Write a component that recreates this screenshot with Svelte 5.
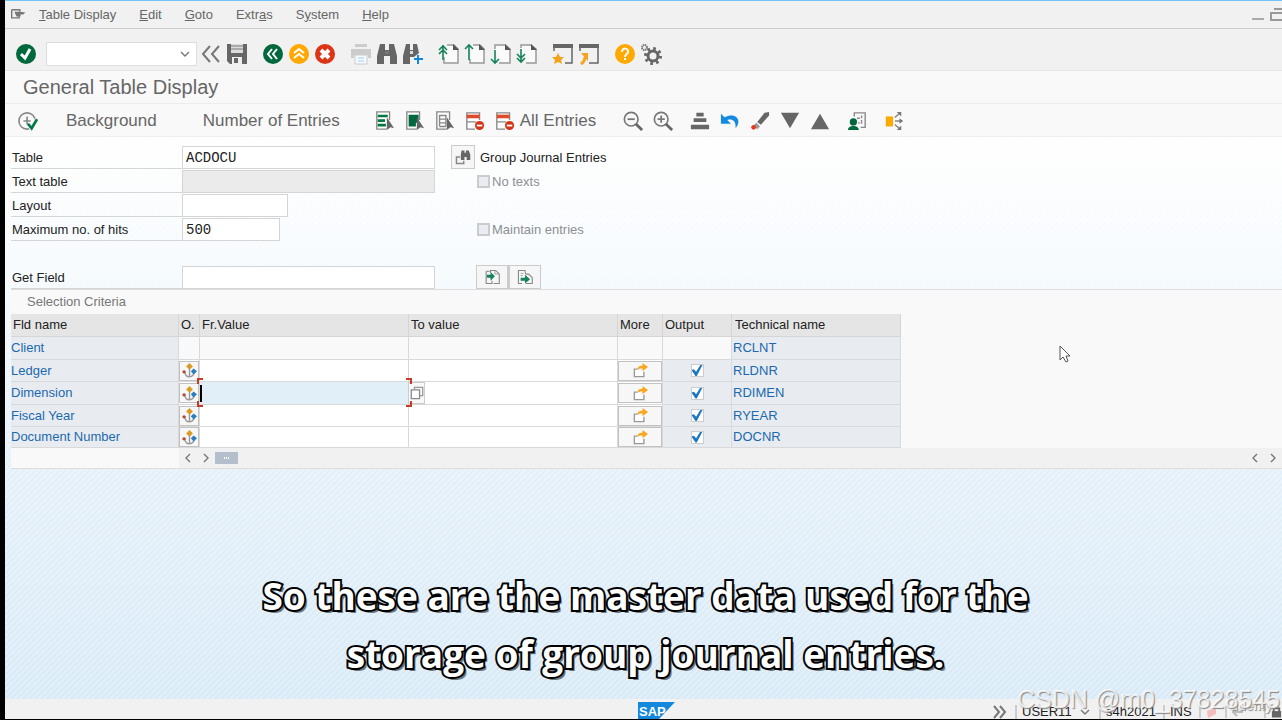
<script>
	const icons = {
		menu: '<path d="M1 4h12v3M1 4v12h11v-3" fill="none" stroke="#777" stroke-width="2"/><path d="M5 7h9l7 1-3 3h-4v3H8z" fill="#777"/>',
		ok: '<circle cx="11" cy="11" r="10" fill="#00683c"/><path d="M6 11l4 4 5-9" fill="none" stroke="#fff" stroke-width="3"/>',
		collapse: '<path d="M10 3l-7 8 7 8M19 3l-7 8 7 8" fill="none" stroke="#777" stroke-width="2"/>',
		save: '<path d="M1 1h20v20H4l-3-3z" fill="#666"/><path d="M5 1h12v9H5z" fill="#ddd"/><path d="M5 3h12M5 6h12" stroke="#777"/><path d="M6 14h10v7H6z" fill="#eee"/><path d="M8 15h4v5H8z" fill="#666"/>',
		back: '<circle cx="11" cy="11" r="10" fill="#00683c"/><path d="M10 6l-4 5 4 5M15 6l-4 5 4 5" fill="none" stroke="#fff" stroke-width="2"/>',
		exit: '<circle cx="11" cy="11" r="10" fill="#ffa800"/><path d="M6 10l5-4 5 4M6 15l5-4 5 4" fill="none" stroke="#fff" stroke-width="2"/>',
		cancel: '<circle cx="11" cy="11" r="10" fill="#dc3415"/><path d="M7 7l8 8M15 7l-8 8" stroke="#fff" stroke-width="4"/>',
		print: '<path d="M5 1h12v3H5z" fill="#ccc"/><path d="M1 6h20v9h-3v-3H4v3H1z" fill="#ccc"/><path d="M5 12h12v9H5z" fill="#f7fafc" stroke="#ccc"/><path d="M8 15h6M8 18h6" stroke="#9bd0f5"/>',
		find: '<path d="M4 1h5v6h4V1h5l3 12v8h-7v-8H8v8H1v-8z" fill="#666"/><path d="M9 8h4v3H9z" fill="#777"/>',
		findNext: '<path d="M4 1h4v6h3V1h4l2 9-5 4H8v7H1v-8z" fill="#666"/><path d="M8 8h3v3H8z" fill="#ddd"/><path d="M16 12v9M12 16h9" stroke="#1087dd" stroke-width="2"/>',
		first: '<path d="M9 2h7l4 4v14H6v-6" fill="#fafafa" stroke="#999" stroke-width="1.5"/><path d="M15 1v6h6z" fill="#555"/><path d="M5 17V2M1 7l4-4 4 4M1 11l4-4 4 4" fill="none" stroke="#16845a" stroke-width="1.6"/>',
		prev: '<path d="M9 2h7l4 4v14H6v-4" fill="#fafafa" stroke="#999" stroke-width="1.5"/><path d="M15 1v6h6z" fill="#555"/><path d="M5 17V2M1 6l4-4 4 4" fill="none" stroke="#16845a" stroke-width="1.6"/>',
		next: '<path d="M5 6V2h10l5 4v14H9" fill="#fafafa" stroke="#999" stroke-width="1.5"/><path d="M15 1v6h6z" fill="#555"/><path d="M5 7v13M1 16l4 4 4-4" fill="none" stroke="#16845a" stroke-width="1.6"/>',
		last: '<path d="M5 5V2h10l5 4v14H10" fill="#fafafa" stroke="#999" stroke-width="1.5"/><path d="M15 1v6h6z" fill="#555"/><path d="M5 6v13M1 11l4 4 4-4M1 15l4 4 4-4" fill="none" stroke="#16845a" stroke-width="1.6"/>',
		session: '<path d="M2 8V3h18v17h-7" fill="none" stroke="#666" stroke-width="1.5"/><path d="M1 1h20v4H1z" fill="#666"/><path d="M6 10l2 4h4l-3 3 1 4-4-2-4 2 1-4-3-3h4z" fill="#f5a21c"/>',
		shortcut: '<path d="M2 8V3h18v17h-9" fill="none" stroke="#666" stroke-width="1.5"/><path d="M1 1h20v4H1z" fill="#666"/><path d="M3 21c3-2 4-4 4-7" fill="none" stroke="#f5a21c" stroke-width="3"/><path d="M3 10h7v8z" fill="#f5a21c"/>',
		help: '<circle cx="11" cy="11" r="10" fill="#ffa800"/><path d="M8 9c0-5 7-4 6 0 0 2-3 2-3 5" fill="none" stroke="#fff" stroke-width="2"/><path d="M10 15h2v2h-2z" fill="#fff"/>',
		settings: '<circle cx="13" cy="13" r="5" fill="none" stroke="#666" stroke-width="3"/><circle cx="13" cy="13" r="7.5" fill="none" stroke="#666" stroke-width="3" stroke-dasharray="2.6 3.29"/><circle cx="4.5" cy="4.5" r="2.5" fill="none" stroke="#777" stroke-width="2" stroke-dasharray="1.4 .56"/>',
		execute: '<circle cx="10" cy="11" r="9" fill="none" stroke="#888" stroke-width="1.8"/><path d="M10 6v9M6 11h8" fill="none" stroke="#888" stroke-width="1.8"/><path d="M11 14l4 5 6-10" fill="none" stroke="#f9f9f9" stroke-width="5"/><path d="M11 14l4 5 6-10" fill="none" stroke="#00784a" stroke-width="3"/>',
		selectAll: '<path d="M13 20H2V1h14v9" fill="#fff" stroke="#888" stroke-width="1.5"/><path d="M3 4h11v3H3zM3 9h8v3H3zM3 14h9v3H3z" fill="#00783f"/><path d="M13 7l8 12-4-1-4 3z" fill="#666"/>',
		selectBlock: '<path d="M13 20H2V1h14v9" fill="#fff" stroke="#888" stroke-width="1.5"/><path d="M4 4h11v9h-3v4H4z" fill="#00683c"/><path d="M13 7l8 12-4-1-4 3z" fill="#666"/>',
		deselect: '<path d="M13 20H2V1h14v9" fill="#fff" stroke="#888" stroke-width="1.5"/><path d="M5 5h8M5 9h7M5 13h7M5 17h7M5 4v13M12 4v13" stroke="#888" stroke-width="1.5"/><path d="M13 7l8 12-4-1-4 3z" fill="#666"/>',
		deleteRow: '<path d="M11 20H2V2h14v8M2 12h10" fill="#fff" stroke="#888" stroke-width="1.5"/><path d="M2 4h14v4H2z" fill="#e04a2b"/><circle cx="16" cy="16" r="5" fill="#d33417"/><path d="M13 16h6" stroke="#fff" stroke-width="2"/>',
		zoomOut: '<circle cx="9" cy="9" r="7.5" fill="none" stroke="#777" stroke-width="1.8"/><path d="M5 9h8" stroke="#777" stroke-width="2"/><path d="M14 14l7 7" stroke="#666" stroke-width="3"/>',
		zoomIn: '<circle cx="9" cy="9" r="7.5" fill="none" stroke="#777" stroke-width="1.8"/><path d="M5 9h8M9 5v8" stroke="#777" stroke-width="2"/><path d="M14 14l7 7" stroke="#666" stroke-width="3"/>',
		sort: '<path d="M7 2h8v4H7zM4 8h14v4H4zM1 15h20v5H1z" fill="#666"/>',
		undo: '<path d="M1 3v11h11L8 10c6-2 10 2 9 9 8-9 0-18-12-12z" fill="#148ae0"/>',
		edit: '<path d="M16 2l5-1v4l-9 10-4-3z" fill="#666"/><path d="M7 13l4 4-3 3-4-4z" fill="#999"/><circle cx="4" cy="18" r="2.6" fill="#e23a1c"/>',
		down: '<path d="M1 2h20L11 19z" fill="#666"/>',
		up: '<path d="M1 20h20L11 3z" fill="#666"/>',
		user: '<path d="M8 6V2h12v16h-5" fill="none" stroke="#888" stroke-width="1.5"/><path d="M11 8h3M16 5v3M16 10v4M12 13h2" stroke="#888" stroke-width="1.5"/><circle cx="7" cy="12" r="4" fill="#00683c"/><path d="M1 21c0-6 12-6 12 0z" fill="#00683c"/>',
		split: '<path d="M2 6h8v11H2z" fill="#ffa800"/><path d="M12 7l6-5M12 11h8M12 15l6 5" stroke="#888" stroke-width="1.5"/><path d="M14 1h5v5zM17 8l4 3-4 3zM14 21h5v-5z" fill="#777"/>',
		lookup: '<path d="M7 11H2v9h10v-4" fill="none" stroke="#888" stroke-width="2"/><path d="M9 2h4v3h2V2h4l2 6v7h-5v-4h-3v4H8V8z" fill="#666"/>',
		getIn: '<path d="M9 5V2h7l5 5v13h-8M3 3h5M3 3v17h8v-4" fill="none" stroke="#888" stroke-width="1.5"/><path d="M15 2v5h5" fill="none" stroke="#888"/><path d="M4 8h5V4l6 6-6 6v-4H4z" fill="#16845a"/>',
		getOut: '<path d="M7 20H2V2h9l1 5M12 7h4l5 5v8h-9" fill="none" stroke="#888" stroke-width="1.5"/><path d="M5 6h4M5 9h3" stroke="#888"/><path d="M5 12h6V8l7 6-7 6v-4H5z" fill="#16845a"/>',
		option: '<path d="M4 13c1 10 13 9 14 0M11 8v12" fill="none" stroke="#999" stroke-width="2"/><path d="M11 0l5 5-5 5-5-5z" fill="#d99b27"/><path d="M13 12l4-4 5 4-5 5z" fill="#2b7cc0"/><circle cx="3" cy="13" r="2.5" fill="#b54a32"/>',
		more: '<path d="M7 9H2v11h14v-7" fill="#fff" stroke="#999" stroke-width="2"/><path d="M7 10c0-5 2-6 7-6V0l8 6-8 6V8c-4 0-5 0-7 2z" fill="#f8a71f"/>',
		copies: '<path d="M7 5V2h13v13h-4" fill="none" stroke="#999" stroke-width="2"/><path d="M2 6h13v14H2z" fill="#fff" stroke="#888" stroke-width="2"/>'
	};

	const menus = [
		['', 'T', 'able Display'],
		['', 'E', 'dit'],
		['', 'G', 'oto'],
		['Extr', 'a', 's'],
		['S', 'y', 'stem'],
		['', 'H', 'elp']
	];

	const systemGroups = [
		['collapse', 'save'],
		['back', 'exit', 'cancel'],
		['print', 'find', 'findNext'],
		['first', 'prev', 'next', 'last'],
		['session', 'shortcut'],
		['help', 'settings']
	];

	const listGroups = [
		['zoomOut', 'zoomIn'],
		['sort', 'undo', 'edit', 'down', 'up'],
		['user'],
		['split']
	];

	let rows = $state([
		{ name: 'Client', tech: 'RCLNT', locked: true },
		{ name: 'Ledger', tech: 'RLDNR', from: '', to: '', output: true },
		{ name: 'Dimension', tech: 'RDIMEN', from: '', to: '', output: true, active: true },
		{ name: 'Fiscal Year', tech: 'RYEAR', from: '', to: '', output: true },
		{ name: 'Document Number', tech: 'DOCNR', from: '', to: '', output: true }
	]);

	let command = $state('');
	let table = $state('ACDOCU');
	let layout = $state('');
	let maxHits = $state('500');
	let getField = $state('');
</script>

{#snippet icon(name)}
	<svg class="icon" viewBox="0 0 22 22" aria-hidden="true">{@html icons[name]}</svg>
{/snippet}

{#snippet iconButton(name)}
	<button class="icon-btn" aria-label={name}>{@render icon(name)}</button>
{/snippet}

{#snippet chevron(d)}
	<svg class="chevron" viewBox="0 0 10 10" aria-hidden="true"><path {d} /></svg>
{/snippet}

<div class="window">
	<nav class="menubar">
		<button class="menu-icon" aria-label="Menu">{@render icon('menu')}</button>
		{#each menus as [before, key, after]}
			<button class="menu">{before}<u>{key}</u>{after}</button>
		{/each}
		<div class="window-controls">
			<svg viewBox="0 0 30 16" aria-hidden="true">
				<path d="M0 12h12" stroke="#aaa" stroke-width="2" />
				<path d="M19 6h14v7H19zM22 2h10" fill="none" stroke="#999" stroke-width="2" />
			</svg>
		</div>
	</nav>

	<div class="toolbar system">
		{@render iconButton('ok')}
		<div class="command">
			<input aria-label="Command" bind:value={command} />
			{@render chevron('M1 3l4 4 4-4')}
		</div>
		{#each systemGroups as group}
			<div class="group">
				{#each group as name}{@render iconButton(name)}{/each}
			</div>
		{/each}
	</div>

	<h1>General Table Display</h1>

	<div class="toolbar list">
		{@render iconButton('execute')}
		<button class="text-btn">Background</button>
		<button class="text-btn">Number of Entries</button>
		<div class="group">
			{#each ['selectAll', 'selectBlock', 'deselect', 'deleteRow'] as name}
				{@render iconButton(name)}
			{/each}
			<button class="all-entries">{@render icon('deleteRow')}All Entries</button>
		</div>
		{#each listGroups as group}
			<div class="group">
				{#each group as name}{@render iconButton(name)}{/each}
			</div>
		{/each}
	</div>

	<main>
		<form>
			<div class="row">
				<label for="table">Table</label>
				<input id="table" bind:value={table} />
				<button type="button" class="lookup" aria-label="Lookup">{@render icon('lookup')}</button>
				<span class="description">Group Journal Entries</span>
			</div>
			<div class="row">
				<label for="text-table">Text table</label>
				<input id="text-table" disabled />
				<label class="check"><input type="checkbox" disabled />No texts</label>
			</div>
			<div class="row">
				<label for="layout">Layout</label>
				<div class="slot"><input id="layout" class="medium" bind:value={layout} /></div>
			</div>
			<div class="row">
				<label for="max-hits">Maximum no. of hits</label>
				<div class="slot"><input id="max-hits" class="short" bind:value={maxHits} /></div>
				<label class="check"><input type="checkbox" disabled />Maintain entries</label>
			</div>
			<div class="row spaced">
				<label for="get-field">Get Field</label>
				<input id="get-field" bind:value={getField} />
				<div class="pair">
					<button type="button" aria-label="Get field">{@render icon('getIn')}</button>
					<button type="button" aria-label="Next field">{@render icon('getOut')}</button>
				</div>
			</div>
		</form>

		<section class="criteria">
			<h2>Selection Criteria</h2>
			<table>
				<colgroup>
					<col class="c-name" /><col class="c-option" /><col class="c-from" /><col class="c-to" />
					<col class="c-more" /><col class="c-output" /><col class="c-tech" />
				</colgroup>
				<thead>
					<tr>
						<th>Fld name</th>
						<th>O.</th>
						<th>Fr.Value</th>
						<th>To value</th>
						<th>More</th>
						<th>Output</th>
						<th>Technical name</th>
					</tr>
				</thead>
				<tbody>
					{#each rows as row}
						<tr class:locked={row.locked}>
							<td class="key">{row.name}</td>
							{#if row.locked}
								<td></td><td></td><td></td><td></td><td></td>
							{:else}
								<td><button class="cell-btn" aria-label="Option">{@render icon('option')}</button></td>
								<td class:active={row.active}>
									<input aria-label="{row.name} from" bind:value={row.from} />
									{#if row.active}
										<span class="caret"></span>
										<button class="value-help" aria-label="Value help">{@render icon('copies')}</button>
										<i class="corner top left"></i>
										<i class="corner top right"></i>
										<i class="corner bottom left"></i>
										<i class="corner bottom right"></i>
									{/if}
								</td>
								<td><input aria-label="{row.name} to" bind:value={row.to} /></td>
								<td><button class="cell-btn" aria-label="More">{@render icon('more')}</button></td>
								<td class="output">
									<input type="checkbox" aria-label="{row.name} output" bind:checked={row.output} />
								</td>
							{/if}
							<td class="key">{row.tech}</td>
						</tr>
					{/each}
				</tbody>
			</table>
			<div class="scrollbar">
				<button aria-label="Left">{@render chevron('M7 1L3 5l4 4')}</button>
				<button aria-label="Right">{@render chevron('M3 1l4 4-4 4')}</button>
				<span class="thumb"><b></b><b></b><b></b></span>
				<button class="push" aria-label="Page left">{@render chevron('M7 1L3 5l4 4')}</button>
				<button aria-label="Page right">{@render chevron('M3 1l4 4-4 4')}</button>
			</div>
		</section>
	</main>

	<footer>
		<svg class="logo" viewBox="0 0 37 17" role="img" aria-label="SAP">
			<path d="M0 0h37L21 17H0z" fill="#1488dc" />
			<text x="1" y="14">SAP</text>
		</svg>
		<div class="status">
			<svg class="expand" viewBox="0 0 14 14" aria-hidden="true"><path d="M1 1l5 6-5 6M7 1l5 6-5 6" /></svg>
			<span class="user">USER11 {@render chevron('M1 3l4 4 4-4')}</span>
			<span class="host">s4h2021</span>
			<span class="mode">INS</span>
			<span class="signal"><svg viewBox="0 0 12 12" aria-hidden="true"><path d="M1 5l9-4v7l-8 4z" fill="#f3bcbc" /></svg></span>
			<span class="transfer"><svg viewBox="0 0 12 12" aria-hidden="true"><path d="M11 6H2M5 2L1 6l4 4" fill="none" stroke="#bbb" stroke-width="2" /></svg></span>
			<span class="lock"><svg viewBox="0 0 12 12" aria-hidden="true"><path d="M3 6V2h6v4" fill="none" stroke="#666" stroke-width="2" /><path d="M1 5h10v7H1z" fill="#666" /></svg></span>
		</div>
	</footer>

	<svg class="pointer" viewBox="0 0 12 18" aria-hidden="true">
		<path d="M1 1v14l3-3 3 5 2-1-2-5h4z" fill="#fff" stroke="#555" />
	</svg>
	<p class="caption">So these are the master data used for the<br />storage of group journal entries.</p>
	<span class="brand">ûdemy</span>
	<span class="watermark">CSDN @m0_37828545</span>
</div>

<style>
	:global(body) {
		background: #000;
	}

	* {
		box-sizing: border-box;
	}

	.window {
		position: relative;
		display: flex;
		flex-direction: column;
		height: 100vh;
		overflow: hidden;
		border-left: 5px solid #000;
		border-bottom: 1px solid #000;
		background: #f9f9f9;
		color: #222;
		font: 13px/16px "Liberation Sans", Arial, sans-serif;
	}

	button,
	input {
		margin: 0;
		padding: 0;
		border: none;
		border-radius: 0;
		outline: none;
		background: none;
		color: inherit;
		font: inherit;
	}

	.icon {
		display: block;
		width: 22px;
		height: 22px;
	}

	.chevron {
		width: 10px;
		height: 10px;
		fill: none;
		stroke: #777;
		stroke-width: 1.4;
	}

	/* Menu and toolbars */
	.menubar {
		display: flex;
		flex: none;
		align-items: center;
		gap: 23px;
		height: 29px;
		padding-left: 6px;
		border-top: 1px solid #6fc5fb;
		border-bottom: 1px solid #ccc;
		background: #f1f1f1;
		color: #666;
	}

	.menu-icon {
		margin-right: -10px;
	}

		.menu-icon .icon {
			width: 15px;
			height: 15px;
		}

	.window-controls {
		margin-left: auto;
	}

		.window-controls svg {
			display: block;
			width: 30px;
			height: 16px;
		}

	.toolbar {
		display: flex;
		flex: none;
		align-items: center;
		padding-left: 10px;
	}

	.system {
		gap: 14px;
		height: 42px;
		padding-top: 8px;
		border-bottom: 1px solid #e6e6e6;
		background: #f1f1f1;
	}

	.command {
		display: flex;
		align-items: center;
		width: 151px;
		height: 24px;
		margin: 0 -11px 0 -5px;
		padding-right: 6px;
		border: 1px solid #ddd;
		background: #fff;
	}

		.command input {
			flex: 1;
			min-width: 0;
		}

	.group {
		display: flex;
		gap: 4px;
	}

	h1 {
		flex: none;
		height: 33px;
		margin: 0;
		padding-left: 18px;
		border-bottom: 1px solid #ececec;
		color: #666;
		font-size: 20px;
		font-weight: normal;
		line-height: 32px;
	}

	.list {
		gap: 17px;
		height: 33px;
		padding-top: 1px;
		padding-left: 13px;
		border-bottom: 1px solid #eee;
		color: #666;
		font-size: 17px;
	}

		.list .icon {
			width: 20px;
			height: 20px;
		}

		.list .group {
			gap: 10px;
		}

	.text-btn {
		padding: 0 18px 0 11px;
	}

	.all-entries {
		display: flex;
		align-items: center;
		gap: 5px;
		padding-right: 10px;
	}

	/* Selection form */
	main {
		flex: 1;
		min-height: 0;
		padding-top: 8px;
		background:
			linear-gradient(135deg, rgba(255, 255, 255, 0.25) 25%, transparent 25% 50%, rgba(255, 255, 255, 0.25) 50% 75%, transparent 75%) 0 0 / 6px 6px,
			linear-gradient(#fefefe, #f5fafd 25%, #e4f0f9 60%, #d8eaf7);
	}

	form {
		padding-left: 6px;
	}

	.row {
		display: flex;
		align-items: flex-end;
		height: 24px;
	}

	.spaced {
		margin-top: 24px;
	}

	.row > label:first-child {
		width: 171px;
		height: 23px;
		padding-left: 1px;
		border-bottom: 1px solid #d5d5d5;
		line-height: 23px;
	}

	.row > input,
	.slot {
		width: 253px;
	}

	.row > input,
	.slot input {
		height: 23px;
		padding: 0 3px;
		border: 1px solid #d5d5d5;
		background: #fff;
		font: 14px "Liberation Mono", monospace;
	}

		.row > input:disabled {
			background: #ebebeb;
		}

	.slot {
		display: flex;
	}

		.slot .medium {
			width: 106px;
		}

		.slot .short {
			width: 98px;
		}

	.lookup,
	.pair button {
		display: flex;
		align-items: center;
		justify-content: center;
		height: 24px;
		border: 1px solid #ccc;
		background: #f6f6f6;
	}

	.lookup {
		width: 24px;
		margin-left: 16px;
	}

		.lookup .icon,
		.pair .icon {
			width: 16px;
			height: 16px;
		}

	.description {
		margin-left: 5px;
		line-height: 23px;
	}

	.check {
		display: flex;
		align-items: center;
		gap: 2px;
		height: 23px;
		margin-left: 42px;
		color: #8c8f95;
	}

	input[type="checkbox"] {
		appearance: none;
		width: 13px;
		height: 13px;
		border: 2px solid #ccc;
		background: #e9ecf1;
	}

	.pair {
		display: flex;
		margin-left: 41px;
	}

		.pair button {
			width: 32px;
		}

			.pair button + button {
				border-left-width: 2px;
				width: 33px;
			}

	/* Criteria table */
	.criteria {
		margin-left: 6px;
		border-top: 1px solid #ddd;
		border-bottom: 1px solid #ddd;
		background: #f9f9f9;
	}

	h2 {
		height: 24px;
		margin: 0;
		padding-left: 16px;
		color: #777;
		font-size: 13px;
		font-weight: normal;
		line-height: 23px;
	}

	table {
		width: 890px;
		border-spacing: 0;
		table-layout: fixed;
	}

	.c-name { width: 168px; }
	.c-option { width: 21px; }
	.c-from { width: 209px; }
	.c-to { width: 209px; }
	.c-more { width: 45px; }
	.c-output { width: 69px; }
	.c-tech { width: 169px; }

	th {
		height: 23px;
		padding: 0 2px;
		border-right: 1px solid #d5d5d5;
		border-bottom: 1px solid #d5d5d5;
		background: #e5e5e5;
		font-weight: normal;
		text-align: left;
		white-space: nowrap;
	}

	th:last-child {
		padding-left: 3px;
	}

	td {
		position: relative;
		height: 23px;
		padding: 0;
		border-right: 1px solid #d9d9d9;
		border-bottom: 1px solid #d9d9d9;
		background: #fff;
	}

	tr:nth-child(even) td {
		height: 22px;
	}

	tr:last-child td {
		height: 21px;
	}

	.locked td {
		background: #f9f9f9;
	}

	td.key,
	.locked .key,
	.output {
		background: #e8ecf1;
	}

	td.key {
		color: #1b69ae;
	}

	td.key:last-child {
		padding-left: 1px;
	}

	td > input:not([type="checkbox"]) {
		display: block;
		width: 100%;
		height: 20px;
		padding: 0 3px;
	}

	.cell-btn {
		display: flex;
		align-items: center;
		justify-content: center;
		width: 100%;
		height: 20px;
		border: 1px solid #c2c2c2;
		background: #f7f7f7;
	}

		.cell-btn .icon {
			width: 15px;
			height: 15px;
		}

	.output {
		text-align: center;
	}

		.output input {
			position: relative;
			display: block;
			margin: 0 auto;
			border-width: 1px;
			background: #fff;
		}

			.output input:checked::before {
				content: "";
				position: absolute;
				inset: 0;
				background: #1a78c2;
				clip-path: polygon(0 45%, 22% 38%, 42% 62%, 80% 0, 100% 0, 48% 100%, 36% 100%);
			}

	td.active {
		z-index: 1;
		background: #e1eff9;
	}

	.caret {
		position: absolute;
		top: 3px;
		left: 0;
		width: 2px;
		height: 17px;
		background: #000;
	}

	.corner {
		position: absolute;
		width: 6px;
		height: 6px;
		border: 0 solid #c43d2b;
	}

	.top { top: -4px; border-top-width: 2px; }
	.bottom { bottom: -3px; border-bottom-width: 2px; }
	.left { left: -3px; border-left-width: 2px; }
	.right { right: -4px; border-right-width: 2px; }

	.value-help {
		position: absolute;
		top: 0;
		left: 100%;
		width: 17px;
		height: 22px;
		padding: 1px;
		border: 1px solid #ccc;
		background: #f9f9f9;
	}

		.value-help .icon {
			width: 14px;
			height: 14px;
		}

	.scrollbar {
		display: flex;
		align-items: center;
		height: 20px;
		margin-left: 168px;
		background: #f1f1f1;
	}

		.scrollbar button {
			width: 18px;
			line-height: 10px;
		}

		.scrollbar .push {
			margin-left: auto;
		}

	.scrollbar .thumb {
		display: flex;
		align-items: center;
		justify-content: center;
		gap: 1px;
		width: 23px;
		height: 12px;
		background: #b4becc;
	}

		.thumb b {
			width: 1px;
			height: 2px;
			background: #fff;
		}

	/* Status bar */
	footer {
		display: grid;
		flex: none;
		grid-template-columns: 1fr auto 1fr;
		align-items: end;
		height: 20px;
		padding-left: 25px;
		background: #f1f1f1;
	}

	.logo {
		grid-column: 2;
		width: 37px;
		height: 17px;
	}

		.logo text {
			fill: #fff;
			font-size: 13px;
			font-weight: bold;
		}

	.status {
		display: flex;
		align-items: center;
		justify-content: flex-end;
		height: 14px;
	}

		.status span {
			display: flex;
			align-items: center;
			gap: 8px;
			padding-left: 5px;
			border-left: 2px solid #ccc;
			line-height: 14px;
		}

		.status span svg:not(.chevron) {
			width: 12px;
			height: 12px;
		}

	.expand {
		width: 14px;
		height: 14px;
		margin-right: 8px;
		fill: none;
		stroke: #777;
		stroke-width: 2;
	}

	.user { width: 84px; }
	.host { width: 64px; }
	.mode { width: 36px; }
	.signal { width: 26px; }
	.transfer { width: 39px; }
	.lock { width: 18px; }

	/* Overlays */
	.pointer {
		position: absolute;
		top: 345px;
		left: 1054px;
		width: 12px;
		height: 18px;
	}

	.caption {
		position: absolute;
		right: 0;
		bottom: 36px;
		left: 4px;
		margin: 0;
		color: #fff;
		font: 700 37px/58px "Open Sans", "Noto Sans", sans-serif;
		text-align: center;
		text-shadow: 3px 3px 0 rgba(0, 0, 0, 0.5);
		-webkit-text-stroke: 4px #000;
		paint-order: stroke fill;
	}

	.brand,
	.watermark {
		position: absolute;
		color: rgba(255, 255, 255, 0.8);
		text-shadow: 1px 1px 1px #888;
	}

	.brand {
		right: 10px;
		bottom: 5px;
		font-weight: bold;
	}

	.watermark {
		right: 2px;
		bottom: 6px;
		font-size: 25px;
		line-height: 28px;
	}
</style>
